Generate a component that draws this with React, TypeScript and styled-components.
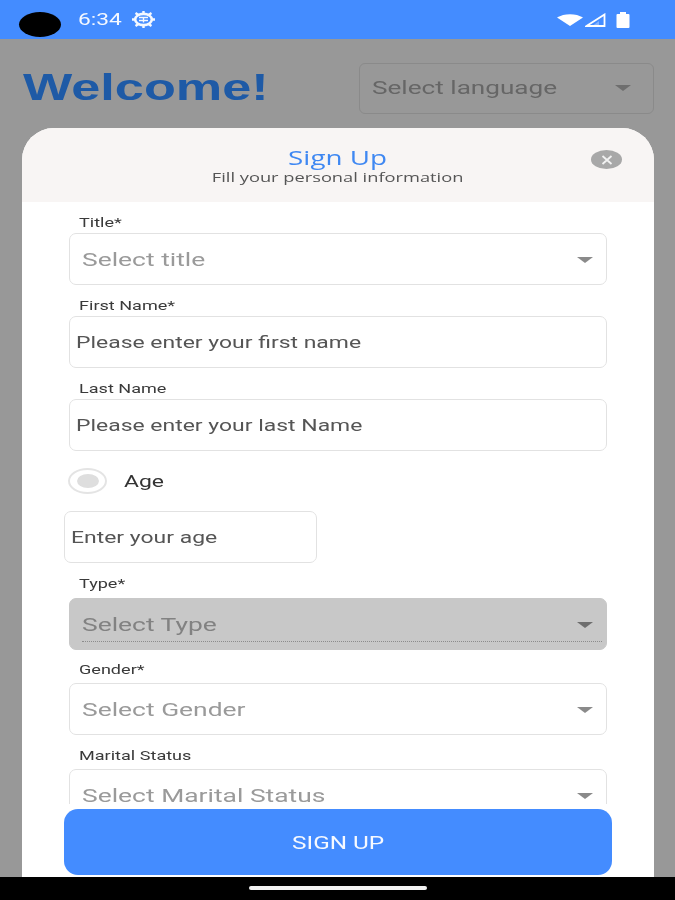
import React from "react";
import styled, { createGlobalStyle } from "styled-components";

const Global = createGlobalStyle`
  html, body { margin: 0; padding: 0; background: #989898; }
  * { box-sizing: border-box; }
  body { font-family: Roboto, "Liberation Sans", sans-serif; }
`;

const Screen = styled.div`
  width: 675px;
  height: 900px;
  display: flex;
  flex-direction: column;
  overflow: hidden;
  background: #989898;
  filter: blur(0.45px);
`;

/* The whole reference is stretched sideways; text keeps that stretch. */
const Wide = styled.span<{ $center?: boolean; $scale?: number }>`
  display: inline-block;
  white-space: nowrap;
  transform: scaleX(${(p) => p.$scale ?? 1.39});
  transform-origin: ${(p) => (p.$center ? "center" : "left")} center;
`;

const StatusBar = styled.div`
  height: 39px;
  flex: none;
  background: #448cff;
  display: flex;
  align-items: center;
  padding: 0 45px 0 19px;
  color: #f4f8ff;
`;

const Camera = styled.div`
  width: 42px;
  height: 25px;
  border-radius: 50%;
  background: #000;
  margin-top: 10px;
`;

const Clock = styled.span`
  margin-left: 17px;
  font-size: 16px;
  font-weight: 400;
`;

const StatusGlyph = styled.svg<{ $gap?: number }>`
  display: block;
  flex: none;
  margin-left: ${(p) => p.$gap ?? 0}px;
`;

const StatusRight = styled.div`
  margin-left: auto;
  display: flex;
  align-items: center;
  gap: 2px;
`;

const Backdrop = styled.div`
  flex: 1;
  min-height: 0;
  display: flex;
  flex-direction: column;
  padding: 24px 21px 0 22px;
`;

const TopRow = styled.div`
  height: 65px;
  flex: none;
  display: flex;
  justify-content: space-between;
  align-items: flex-start;
`;

const Welcome = styled.h1`
  margin: 2px 0 0 1px;
  font-family: "Liberation Sans", sans-serif;
  font-size: 36px;
  line-height: 46px;
  font-weight: 700;
  color: #1e5aa6;
`;

const LanguageSelect = styled.div`
  width: 295px;
  height: 51px;
  border: 1px solid #8a8a8a;
  border-radius: 6px;
  display: flex;
  align-items: center;
  justify-content: space-between;
  padding: 0 22px 2px 12px;
  font-size: 19px;
  color: #666;
`;

const Caret = styled.span<{ $color?: string }>`
  width: 0;
  height: 0;
  flex: none;
  border-left: 8.5px solid transparent;
  border-right: 8.5px solid transparent;
  border-top: 6px solid ${(p) => p.$color ?? "#8a8a8a"};
`;

const Modal = styled.div`
  flex: 1;
  min-height: 0;
  background: #fff;
  border-radius: 32px 32px 0 0;
  display: flex;
  flex-direction: column;
  overflow: hidden;
`;

const ModalHead = styled.header`
  position: relative;
  height: 74px;
  flex: none;
  background: #f8f5f4;
  display: flex;
  flex-direction: column;
  align-items: center;
  padding-top: 20px;
`;

const ModalTitle = styled.div`
  font-family: "Open Sans", sans-serif;
  font-size: 20px;
  line-height: 20px;
  color: #3f88f2;
`;

const ModalSub = styled.div`
  margin-top: 2px;
  font-family: "Open Sans", sans-serif;
  font-size: 13px;
  line-height: 14px;
  color: #555;
`;

const CloseBadge = styled.div`
  position: absolute;
  top: 22px;
  right: 32px;
  width: 31px;
  height: 19px;
  border-radius: 50%;
  background: #a8a8a8;
  display: flex;
  align-items: center;
  justify-content: center;
`;

const Form = styled.div`
  flex: 1;
  min-height: 0;
  overflow: hidden;
  display: flex;
  flex-direction: column;
  padding: 13px 47px 0 47px;
  margin-bottom: 5px;
`;

const Label = styled.label<{ $tall?: number }>`
  height: ${(p) => p.$tall ?? 18}px;
  flex: none;
  padding-left: 10px;
  font-size: 13px;
  line-height: 15px;
  color: #3a3a3a;
`;

const Box = styled.div<{ $filled?: boolean }>`
  height: 52px;
  flex: none;
  display: flex;
  align-items: center;
  justify-content: space-between;
  border-radius: 7px;
  border: 1px solid ${(p) => (p.$filled ? "#c8c8c8" : "#e2e2e2")};
  background: ${(p) => (p.$filled ? "#c8c8c8" : "#fff")};
  position: relative;
`;

const SelectBox = styled(Box)`
  padding: 1px 13px 0 12px;
  margin-bottom: 13px;
  font-size: 19px;
  color: #9a9a9a;
`;

const FilledBox = styled(SelectBox)`
  margin-bottom: 12px;
  color: #828282;
`;

const DottedLine = styled.span`
  position: absolute;
  left: 12px;
  right: 4px;
  bottom: 7px;
  border-bottom: 1px dotted #8c8c8c;
`;

const InputBox = styled(Box)`
  padding: 0 6px;
  margin-bottom: 13px;
  font-size: 16.5px;
  color: #555;
`;

const AgeRow = styled.div`
  display: flex;
  align-items: center;
  height: 28px;
  flex: none;
  margin: 3px 0 16px -1px;
`;

const Radio = styled.span`
  width: 39px;
  height: 26px;
  border: 2px solid #e4e4e4;
  border-radius: 50%;
  display: flex;
  align-items: center;
  justify-content: center;
`;

const RadioDot = styled.span`
  width: 22px;
  height: 14px;
  border-radius: 50%;
  background: #dedede;
`;

const AgeLabel = styled.span`
  margin-left: 17px;
  font-size: 16.5px;
  color: #333;
`;

const AgeInput = styled(InputBox)`
  width: 253px;
  margin: 0 0 13px -5px;
`;

const Footer = styled.div`
  height: 68px;
  flex: none;
  padding: 0 42px 2px;
`;

const SignUp = styled.button`
  width: 100%;
  height: 66px;
  border: none;
  border-radius: 14px;
  padding: 2px 0 0;
  background: #448cff;
  color: #f6f9ff;
  font-family: Roboto, sans-serif;
  font-size: 17.5px;
`;

const NavBar = styled.div`
  height: 23px;
  flex: none;
  background: #000;
  display: flex;
  justify-content: center;
  padding-top: 9px;
`;

const HomePill = styled.span`
  width: 178px;
  height: 4px;
  border-radius: 2px;
  background: #f2f2f2;
`;

const Cog = () => (
  <StatusGlyph $gap={23} width="23" height="17" viewBox="0 0 23 17">
    <ellipse cx="11.500" cy="8.500" rx="8.300" ry="5.600" fill="none" stroke="#f4f8ff" strokeWidth="2.600" />
    <path d="M11.500 0v4M11.500 13v4M0 8.500h4M19 8.500h4M3.500 2l3 2M19.500 2l-3 2M3.500 15l3-2M19.500 15l-3-2" stroke="#f4f8ff" strokeWidth="2.400" />
    <path d="M7 6.500h9M7 9.500h9M11.500 6.500v5" stroke="#f4f8ff" strokeWidth="1.400" />
  </StatusGlyph>
);

const Wifi = () => (
  <StatusGlyph width="26" height="12" viewBox="0 0 26 12">
    <path d="M0 3.500C7-1 19-1 26 3.500L13 12z" fill="#fff" />
  </StatusGlyph>
);

const Signal = () => (
  <StatusGlyph width="21" height="14" viewBox="0 0 21 14">
    <path d="M1.500 13 19.500 1.500V13z" fill="none" stroke="#fff" strokeWidth="1.800" />
    <path d="M8 12.500 14 8v4.500z" fill="#fff" opacity=".35" />
  </StatusGlyph>
);

const Battery = () => (
  <StatusGlyph $gap={8} width="14" height="16" viewBox="0 0 14 16">
    <path d="M4 0h6v2h2.500a1 1 0 0 1 1 1v12a1 1 0 0 1-1 1h-11a1 1 0 0 1-1-1V3a1 1 0 0 1 1-1H4z" fill="#fff" />
  </StatusGlyph>
);

const selects = [
  { label: "Gender*", placeholder: "Select Gender" },
  { label: "Marital Status", placeholder: "Select Marital Status" },
];

export default function App() {
  return (
    <Screen>
      <Global />
      <StatusBar>
        <Camera />
        <Clock>
          <Wide $scale={1.42}>6:34</Wide>
        </Clock>
        <Cog />
        <StatusRight>
          <Wifi />
          <Signal />
          <Battery />
        </StatusRight>
      </StatusBar>
      <Backdrop>
        <TopRow>
          <Welcome>
            <Wide $scale={1.45}>Welcome!</Wide>
          </Welcome>
          <LanguageSelect>
            <Wide $scale={1.375}>Select language</Wide>
            <Caret $color="#6e6e6e" />
          </LanguageSelect>
        </TopRow>
        <Modal>
          <ModalHead>
            <ModalTitle>
              <Wide $center>Sign Up</Wide>
            </ModalTitle>
            <ModalSub>
              <Wide $center $scale={1.405}>Fill your personal information</Wide>
            </ModalSub>
            <CloseBadge>
              <svg width="12" height="10" viewBox="0 0 12 10">
                <path d="M1.500 1 10.500 9M10.500 1 1.500 9" stroke="#f2f2f2" strokeWidth="1.800" />
              </svg>
            </CloseBadge>
          </ModalHead>
          <Form>
            <Label>
              <Wide>Title*</Wide>
            </Label>
            <SelectBox>
              <Wide>Select title</Wide>
              <Caret />
            </SelectBox>
            <Label>
              <Wide>First Name*</Wide>
            </Label>
            <InputBox>
              <Wide>Please enter your first name</Wide>
            </InputBox>
            <Label>
              <Wide>Last Name</Wide>
            </Label>
            <InputBox>
              <Wide>Please enter your last Name</Wide>
            </InputBox>
            <AgeRow>
              <Radio>
                <RadioDot />
              </Radio>
              <AgeLabel>
                <Wide>Age</Wide>
              </AgeLabel>
            </AgeRow>
            <AgeInput>
              <Wide>Enter your age</Wide>
            </AgeInput>
            <Label $tall={22}>
              <Wide>Type*</Wide>
            </Label>
            <FilledBox $filled>
              <Wide>Select Type</Wide>
              <Caret $color="#6e6e6e" />
              <DottedLine />
            </FilledBox>
            {selects.map((s) => (
              <React.Fragment key={s.label}>
                <Label $tall={21}>
                  <Wide>{s.label}</Wide>
                </Label>
                <SelectBox>
                  <Wide>{s.placeholder}</Wide>
                  <Caret />
                </SelectBox>
              </React.Fragment>
            ))}
          </Form>
          <Footer>
            <SignUp>
              <Wide $center>SIGN UP</Wide>
            </SignUp>
          </Footer>
        </Modal>
      </Backdrop>
      <NavBar>
        <HomePill />
      </NavBar>
    </Screen>
  );
}
